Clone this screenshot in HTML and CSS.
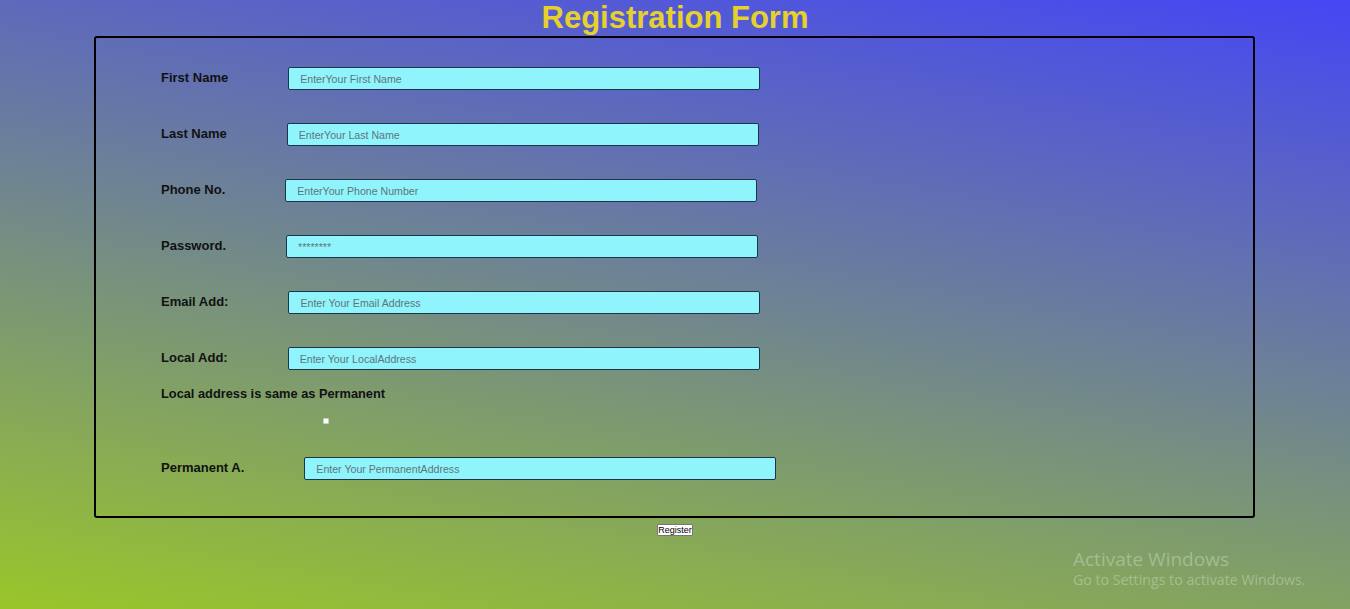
FILE: index.html
```html
<!DOCTYPE html>
<html lang="en">
<head>
<meta charset="utf-8">
<title>Registration Form</title>
<link rel="stylesheet" href="styles.css">
</head>
<body>
<h1 class="title">Registration Form</h1>
<form class="form-box">
  <div class="row">
    <label class="lbl">First Name</label>
    <input class="field" type="text" placeholder="EnterYour First Name">
  </div>
  <div class="row">
    <label class="lbl">Last Name</label>
    <input class="field" type="text" placeholder="EnterYour Last Name">
  </div>
  <div class="row">
    <label class="lbl">Phone No.</label>
    <input class="field" type="text" placeholder="EnterYour Phone Number">
  </div>
  <div class="row">
    <label class="lbl">Password.</label>
    <input class="field" type="password" placeholder="********">
  </div>
  <div class="row">
    <label class="lbl">Email Add:</label>
    <input class="field" type="text" placeholder="Enter Your Email Address">
  </div>
  <div class="row row-last">
    <label class="lbl">Local Add:</label>
    <input class="field" type="text" placeholder="Enter Your LocalAddress">
  </div>
  <div class="same-text">Local address is same as Permanent</div>
  <input class="check" type="checkbox">
  <div class="row row-perm">
    <label class="lbl">Permanent A.</label>
    <input class="field" type="text" placeholder="Enter Your PermanentAddress">
  </div>
</form>
<div class="btn-wrap"><button class="btn" type="button">Register</button></div>
<div class="watermark">
  <div class="wm-title">Activate Windows</div>
  <div class="wm-sub">Go to Settings to activate Windows.</div>
</div>
</body>
</html>
```
FILE: styles.css
```css
html, body {
  margin: 0;
  padding: 0;
}
body {
  width: 1350px;
  height: 609px;
  overflow: hidden;
  position: relative;
  font-family: "Liberation Sans", Arial, sans-serif;
  background: linear-gradient(10deg, #9ac62a 0%, #4646f4 100%);
}
.title {
  margin: 0;
  height: 36px;
  font-size: 31px;
  line-height: 36px;
  font-weight: bold;
  text-align: center;
  color: #e6d02e;
}
.form-box {
  margin: 0 95px 0 94px;
  border: 2px solid #000;
  border-radius: 3px;
  padding: 29px 0 0 65px;
  box-sizing: border-box;
  height: 482px;
}
.row {
  display: flex;
  align-items: center;
  height: 23px;
  margin-bottom: 33px;
}
.row-last {
  margin-bottom: 16px;
}
.lbl {
  font-size: 13px;
  font-weight: bold;
  color: #111;
  margin-right: 60px;
  padding-bottom: 2px;
  white-space: nowrap;
}
.field {
  width: 472px;
  height: 23px;
  box-sizing: border-box;
  margin: 0;
  padding: 0 0 0 11px;
  background: #90f4fc;
  border: 1px solid #1c3548;
  border-radius: 2px;
  font-family: "Liberation Sans", Arial, sans-serif;
  font-size: 10.6px;
  color: #333;
  outline: none;
}
.field::placeholder {
  color: #5f7478;
  opacity: 1;
}
.same-text {
  font-size: 12.8px;
  font-weight: bold;
  color: #111;
  line-height: 15px;
}
.check {
  display: block;
  appearance: none;
  -webkit-appearance: none;
  width: 6px;
  height: 6px;
  margin: 17px 0 0 162px;
  padding: 0;
  background: #fff;
  border: 1px solid #c8d0c0;
  border-radius: 1px;
}
.row-perm {
  margin-top: 33px;
  margin-bottom: 0;
}
.btn-wrap {
  text-align: center;
  margin-top: 6px;
  line-height: 0;
}
.btn {
  font-family: "Liberation Sans", Arial, sans-serif;
  font-size: 9px;
  line-height: 10px;
  padding: 0;
  margin: 0;
  background: #fff;
  color: #000;
  border: 1px solid #777;
  border-radius: 1px;
}
.watermark {
  position: absolute;
  left: 1073px;
  top: 547px;
  color: rgba(255, 255, 255, 0.3);
  font-family: "Open Sans", "Noto Sans", sans-serif;
}
.wm-title {
  font-size: 19px;
  line-height: 24px;
}
.wm-sub {
  font-size: 14.2px;
  line-height: 18px;
}
```
